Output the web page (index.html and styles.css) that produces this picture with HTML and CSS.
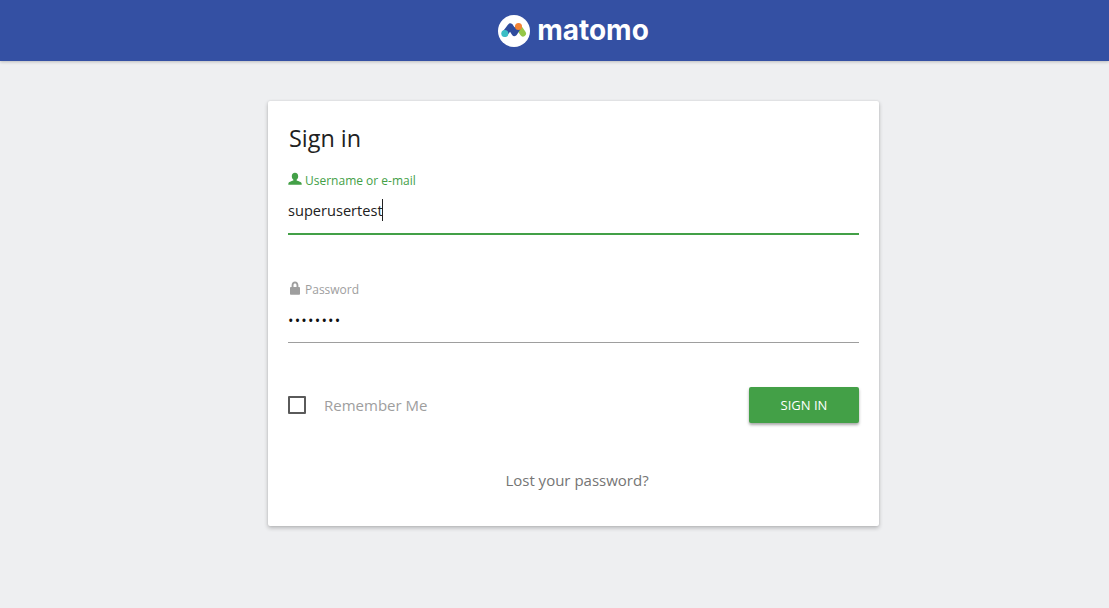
FILE: index.html
```html
<!DOCTYPE html>
<html lang="en">
<head>
<meta charset="utf-8">
<title>Sign in - Matomo</title>
<link rel="stylesheet" href="styles.css">
</head>
<body>
<header class="topbar">
  <div class="brand">
    <svg class="brand-mark" viewBox="0 0 32 32" aria-hidden="true">
      <circle cx="16" cy="16" r="16" fill="#fff"/>
      <path d="M20.5 12 L25 18.500" fill="none" stroke="#95C748" stroke-width="6" stroke-linecap="round"/>
      <path d="M7 18.500 L12.300 11.500 L16.500 18 L20 12.500" fill="none" stroke="#2F4C9E" stroke-width="6" stroke-linecap="round" stroke-linejoin="round"/>
      <circle cx="20.500" cy="11.500" r="3.500" fill="#F38334"/>
      <circle cx="6.800" cy="18.500" r="3.500" fill="#3BBFC6"/>
    </svg>
    <span class="brand-name">matomo</span>
  </div>
</header>
<main class="page">
  <section class="card">
    <h1 class="title">Sign in</h1>
    <div class="field field-active">
      <label class="field-label">
        <svg class="field-icon" viewBox="0 0 14 14" aria-hidden="true"><path d="M7 0.8c2 0 3.2 1.5 3.2 3.5 0 1.4-.6 2.600-1.500 3.200v1c0 .4 4.300 1.100 4.800 2.400.2.600.2 1.200.2 1.800H.3c0-.6 0-1.200.2-1.800C1 9.600 5.300 8.900 5.300 8.500v-1C4.400 6.900 3.800 5.700 3.800 4.300 3.800 2.300 5 .8 7 .8z" fill="currentColor"/></svg>
        <span>Username or e-mail</span>
      </label>
      <div class="field-value">superusertest<span class="caret"></span></div>
    </div>
    <div class="field">
      <label class="field-label">
        <svg class="field-icon" viewBox="0 0 14 14" aria-hidden="true"><path fill-rule="evenodd" d="M7 .6c2 0 3.400 1.500 3.400 3.600v1.900h.8c.5 0 .8.300.8.800v6c0 .5-.3.800-.8.800H2.800c-.5 0-.8-.3-.8-.8v-6c0-.5.300-.8.800-.8h.8V4.200C3.600 2.100 5 .6 7 .6zm0 1.900c-.9 0-1.500.7-1.500 1.700v1.900h3V4.200c0-1-.6-1.700-1.500-1.700z" fill="currentColor"/></svg>
        <span>Password</span>
      </label>
      <div class="field-value dots">••••••••</div>
    </div>
    <div class="actions">
      <label class="remember"><span class="checkbox"></span><span>Remember Me</span></label>
      <button class="submit" type="button">SIGN IN</button>
    </div>
    <a class="lost" href="#">Lost your password?</a>
  </section>
</main>
</body>
</html>
```
FILE: styles.css
```css
* { box-sizing: border-box; }
html, body { margin: 0; height: 100%; }
body {
  background: #eeeff1;
  font-family: "Open Sans", "Noto Sans", sans-serif;
  color: #212121;
  overflow: hidden;
}
.topbar {
  height: 61px;
  background: #3450a3;
  box-shadow: 0 1px 3px rgba(0,0,0,.22);
  padding-left: 38px;
  display: flex;
  align-items: center;
  justify-content: center;
}
.brand { display: flex; align-items: center; gap: 7px; margin-top: 1px; }
.brand-mark { width: 32px; height: 32px; display: block; }
.brand-name {
  font-family: "Inter", sans-serif;
  font-weight: 700;
  font-size: 28px;
  line-height: 32px;
  color: #fff;
  margin-top: -3px;
}
.page { display: flex; justify-content: center; padding: 40px 0 0 38px; }
.card {
  width: 611px;
  height: 425px;
  background: #fff;
  border-radius: 2px;
  box-shadow: 0 2px 4px rgba(0,0,0,.24), 0 0 2px rgba(0,0,0,.1);
  padding: 20px 20px 20px 20px;
  display: flex;
  flex-direction: column;
}
.title {
  margin: -1px 0 1px 1px;
  font-size: 23.4px;
  font-weight: 400;
  line-height: 36px;
  color: #212121;
}
.field { height: 61px; border-bottom: 1px solid #9e9e9e; }
.field + .field { margin-top: 45px; height: 63px; }
.field-active { border-bottom: 2px solid #43a047; height: 64px; margin-top: 14px; }
.field-label {
  display: flex;
  align-items: center;
  gap: 3px;
  height: 18px;
  font-size: 12px;
  color: #9e9e9e;
}
.field-active .field-label { color: #43a047; }
.field-icon { width: 14px; height: 14px; display: block; margin-top: -2px; }
.field-value {
  margin-top: 10px;
  font-size: 14.6px;
  line-height: 24px;
  color: #212121;
  display: flex;
  align-items: center;
}
.field-active .field-value { margin-top: 9px; }
.dots { letter-spacing: 1.2px; color: #111; }
.caret { width: 1px; height: 22px; background: #212121; margin-left: -1px; }
.actions {
  margin-top: 44px;
  height: 36px;
  display: flex;
  align-items: center;
  justify-content: space-between;
}
.remember {
  display: flex;
  align-items: center;
  gap: 18px;
  font-size: 15px;
  color: #9e9e9e;
}
.checkbox {
  width: 18px;
  height: 18px;
  border: 2px solid #5a5a5a;
  border-radius: 1px;
}
.submit {
  width: 110px;
  height: 36px;
  border: 0;
  border-radius: 2px;
  background: #43a047;
  color: #fff;
  font: 400 13px "Open Sans", "Noto Sans", sans-serif;
  box-shadow: 0 2px 3px rgba(0,0,0,.35);
  padding: 0;
}
.lost {
  align-self: center;
  margin-top: 45px;
  margin-left: 7px;
  font-size: 15px;
  line-height: 24px;
  color: #757575;
  text-decoration: none;
}
```
